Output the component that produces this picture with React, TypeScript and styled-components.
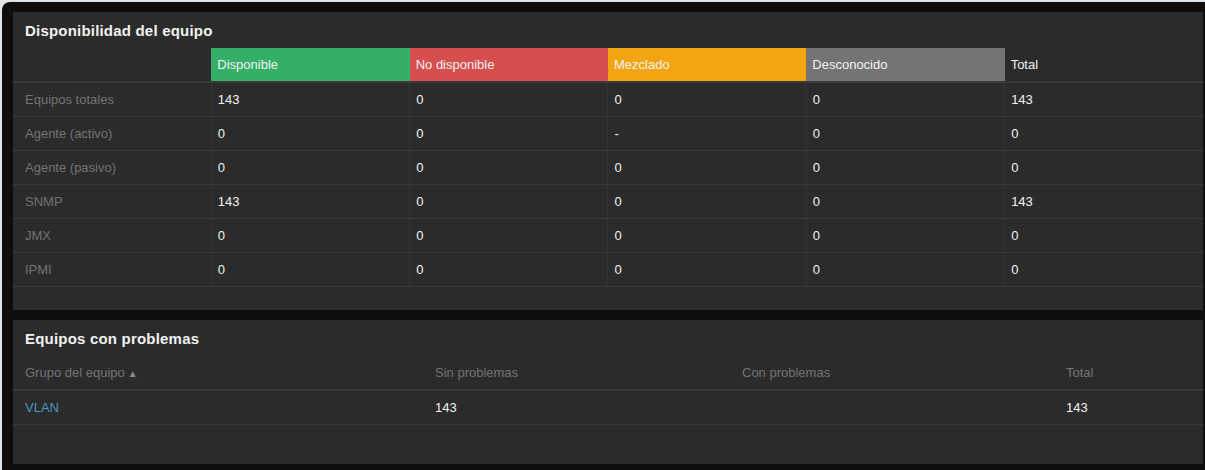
import React from "react";
import styled, { createGlobalStyle } from "styled-components";

const Global = createGlobalStyle`
  html, body { margin: 0; padding: 0; background: #dfe6ec; }
  body { font-family: "Liberation Sans", Arial, sans-serif; font-size: 13px; }
`;

const Frame = styled.div`
  margin: 2px 0 0 2px;
  height: 468px;
  background: #0e0e0f;
  border-radius: 8px 0 0 0;
  padding: 10px 2px 0 11px;
  box-sizing: border-box;
  display: flex;
  flex-direction: column;
  gap: 10px;
  overflow: hidden;
`;

const Panel = styled.section<{ $h: number }>`
  background: #2b2b2b;
  height: ${(p) => p.$h}px;
  flex: none;
  box-sizing: border-box;
`;

const Title = styled.h4`
  margin: 0;
  height: 36px;
  line-height: 38px;
  padding-left: 12px;
  font-size: 15px;
  letter-spacing: 0.2px;
  font-weight: bold;
  color: #f2f2f2;
`;

const Table = styled.table`
  width: 100%;
  border-collapse: collapse;
  table-layout: fixed;
`;

const HeadCell = styled.th<{ $bg?: string; $first?: boolean }>`
  height: 33px;
  padding: 0 0 0 ${(p) => (p.$first ? 12 : 6)}px;
  text-align: left;
  font-weight: normal;
  color: #f2f2f2;
  background: ${(p) => p.$bg || "transparent"};
  border-bottom: 2px solid #3a3a3a;
  vertical-align: middle;
`;

const Row = styled.tr`
  border-bottom: 1px solid #3a3a3a;
`;

const Label = styled.td`
  height: 33px;
  padding: 0 0 0 12px;
  color: #737373;
  vertical-align: middle;
`;

const Value = styled.td`
  height: 33px;
  padding: 0 0 0 6px;
  color: #f2f2f2;
  border-left: 1px dotted #3c3c3c;
  vertical-align: middle;
`;

const ProbHead = styled.th<{ $w?: number }>`
  height: 33px;
  padding: 0 0 0 12px;
  text-align: left;
  font-weight: normal;
  color: #737373;
  border-bottom: 2px solid #3a3a3a;
  width: ${(p) => (p.$w ? `${p.$w}px` : "auto")};
  vertical-align: middle;
`;

const ProbCell = styled.td`
  height: 33px;
  padding: 0 0 0 12px;
  color: #f2f2f2;
  vertical-align: middle;
`;

const Link = styled.a`
  color: #4796c4;
  text-decoration: none;
`;

const Arrow = styled.span`
  font-size: 10px;
  margin-left: 3px;
  color: #8a8a8a;
`;

const headers = [
  { t: "Disponible", bg: "#34af67" },
  { t: "No disponible", bg: "#d64e4e" },
  { t: "Mezclado", bg: "#f2a50e" },
  { t: "Desconocido", bg: "#747474" },
  { t: "Total" },
];

const rows: [string, string[]][] = [
  ["Equipos totales", ["143", "0", "0", "0", "143"]],
  ["Agente (activo)", ["0", "0", "-", "0", "0"]],
  ["Agente (pasivo)", ["0", "0", "0", "0", "0"]],
  ["SNMP", ["143", "0", "0", "0", "143"]],
  ["JMX", ["0", "0", "0", "0", "0"]],
  ["IPMI", ["0", "0", "0", "0", "0"]],
];

export default function App() {
  return (
    <>
      <Global />
      <Frame>
        <Panel $h={298}>
          <Title>Disponibilidad del equipo</Title>
          <Table>
            <thead>
              <tr>
                <HeadCell $first />
                {headers.map((h) => (
                  <HeadCell key={h.t} $bg={h.bg}>
                    {h.t}
                  </HeadCell>
                ))}
              </tr>
            </thead>
            <tbody>
              {rows.map(([l, vals]) => (
                <Row key={l}>
                  <Label>{l}</Label>
                  {vals.map((v, i) => (
                    <Value key={i}>{v}</Value>
                  ))}
                </Row>
              ))}
            </tbody>
          </Table>
        </Panel>
        <Panel $h={144}>
          <Title>Equipos con problemas</Title>
          <Table>
            <thead>
              <tr>
                <ProbHead $w={398}>
                  Grupo del equipo<Arrow>▲</Arrow>
                </ProbHead>
                <ProbHead $w={295}>Sin problemas</ProbHead>
                <ProbHead $w={312}>Con problemas</ProbHead>
                <ProbHead>Total</ProbHead>
              </tr>
            </thead>
            <tbody>
              <Row>
                <ProbCell>
                  <Link href="#">VLAN</Link>
                </ProbCell>
                <ProbCell>143</ProbCell>
                <ProbCell></ProbCell>
                <ProbCell>143</ProbCell>
              </Row>
            </tbody>
          </Table>
        </Panel>
      </Frame>
    </>
  );
}
